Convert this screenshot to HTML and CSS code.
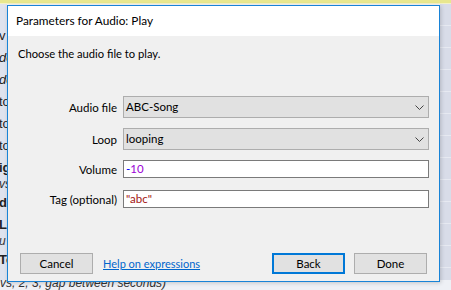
FILE: index.html
```html
<!DOCTYPE html>
<html>
<head>
<meta charset="utf-8">
<link rel="stylesheet" href="styles.css">
</head>
<body>
<div class="desktop">
  <div class="topband"></div>
  <div class="bg-main">
    <ul class="bg-left">
      <li class="r">v</li>
      <li class="i">do</li>
      <li class="i">do</li>
      <li class="r">to</li>
      <li class="r">to</li>
      <li class="r">to</li>
      <li class="b">ig</li>
      <li class="i sm">vs</li>
      <li class="b">d</li>
      <li class="b">Le</li>
      <li class="i sm">u</li>
      <li class="b">To</li>
    </ul>
    <div class="bg-mid"></div>
    <div class="bg-right"></div>
  </div>
  <div class="bg-bottom">vs, 2, 3, gap between seconds)</div>

  <div class="dialog">
    <div class="titlebar">Parameters for Audio: Play</div>
    <div class="content">
      <p class="desc">Choose the audio file to play.</p>
      <div class="form">
        <label class="lbl">Audio file</label>
        <div class="select"><span>ABC-Song</span><svg class="chev" width="9" height="6" viewBox="0 0 9 6"><polyline points="0.5,0.5 4.5,4.5 8.5,0.5" fill="none" stroke="#444" stroke-width="1"/></svg></div>
        <label class="lbl">Loop</label>
        <div class="select"><span>looping</span><svg class="chev" width="9" height="6" viewBox="0 0 9 6"><polyline points="0.5,0.5 4.5,4.5 8.5,0.5" fill="none" stroke="#444" stroke-width="1"/></svg></div>
        <label class="lbl">Volume</label>
        <div class="input"><span class="op">-</span><span class="num">10</span></div>
        <label class="lbl shift">Tag (optional)</label>
        <div class="input shift"><span class="str">"abc"</span></div>
      </div>
      <div class="buttons">
        <button class="btn">Cancel</button>
        <a class="help" href="#">Help on expressions</a>
        <span class="spacer"></span>
        <button class="btn focused">Back</button>
        <button class="btn">Done</button>
      </div>
    </div>
  </div>
</div>
</body>
</html>
```

FILE: styles.css
```css
* { box-sizing: border-box; }
html, body { margin: 0; padding: 0; }
body {
  width: 451px;
  height: 290px;
  overflow: hidden;
  font-family: Lato, "Noto Sans", sans-serif;
  font-size: 11.5px;
  color: #000;
  background: #f4f4f4;
}
.desktop {
  position: relative;
  width: 451px;
  height: 290px;
  display: flex;
  flex-direction: column;
}
.topband {
  height: 4px;
  background: #e8e78e;
  border-bottom: 1px solid #f3f2c6;
}
.bg-main {
  flex: 1;
  display: flex;
  min-height: 0;
}
.bg-left {
  list-style: none;
  margin: 0;
  padding: 21px 0 0 0;
  width: 7px;
  overflow: hidden;
  background: #dfe3ee;
  font-family: "Liberation Sans", sans-serif;
  color: #222;
  font-size: 13px;
}
.bg-left li {
  height: 22px;
  line-height: 22px;
  margin-left: -1px;
  white-space: nowrap;
}
.bg-left li.i { font-style: italic; }
.bg-left li.b { font-weight: bold; }
.bg-left li.sm { height: 13px; line-height: 11px; font-size: 12px; color: #333; }
.bg-mid {
  flex: 1;
  background: #f4f4f4;
}
.bg-right {
  width: 11px;
  background-color: #d8dce8;
  background-image: repeating-linear-gradient(to bottom, transparent 0, transparent 21px, #e6e9f1 21px, #e6e9f1 22px);
}
.bg-bottom {
  height: 10px;
  line-height: 6px;
  overflow: hidden;
  white-space: nowrap;
  font-family: "Liberation Sans", sans-serif;
  font-style: italic;
  font-size: 12px;
  color: #333;
  background: #eef0f5;
}

.dialog {
  position: absolute;
  left: 7px;
  top: 5px;
  width: 433px;
  height: 277px;
  border: 1px solid #1883d7;
  background: #f0f0f0;
  display: flex;
  flex-direction: column;
  box-shadow: 1px 1px 4px rgba(0, 0, 0, 0.18);
}
.titlebar {
  height: 30px;
  line-height: 30px;
  background: #fff;
  padding-left: 8px;
  font-size: 11.8px;
  white-space: nowrap;
}
.content {
  flex: 1;
  display: flex;
  flex-direction: column;
  padding: 11px 10px 7px 10px;
}
.desc {
  margin: 0;
  height: 14px;
  line-height: 14px;
  font-size: 11.2px;
}
.form {
  margin-top: 35px;
  display: grid;
  grid-template-columns: 99px 1fr;
  column-gap: 6px;
  row-gap: 10px;
  align-items: center;
}
.lbl {
  text-align: right;
  white-space: nowrap;
}
.shift { margin-top: 2px; }
.select {
  height: 22px;
  background: #e1e1e1;
  border: 1px solid #adadad;
  display: flex;
  align-items: center;
  justify-content: space-between;
  padding: 0 4px 0 2px;
}
.select span { line-height: 20px; }
.chev { margin-top: 1px; }
.input {
  height: 18px;
  background: #fff;
  border: 1px solid #7a7a7a;
  padding-left: 2px;
  line-height: 16px;
}
.op { color: #0000ff; }
.num { color: #9b00d6; }
.str { color: #a31515; }
.buttons {
  margin-top: auto;
  display: flex;
  align-items: center;
  height: 21px;
  padding-left: 2px;
  padding-right: 2px;
}
.btn {
  font: inherit;
  color: #000;
  width: 73px;
  height: 21px;
  padding: 0;
  background: #e1e1e1;
  border: 1px solid #adadad;
  border-radius: 0;
}
.btn.focused {
  border: 2px solid #0078d7;
}
.btn + .btn { margin-left: 9px; }
.help {
  margin-left: 10px;
  color: #0066cc;
  text-decoration: underline;
  font-size: 11px;
}
.spacer { flex: 1; }
```
